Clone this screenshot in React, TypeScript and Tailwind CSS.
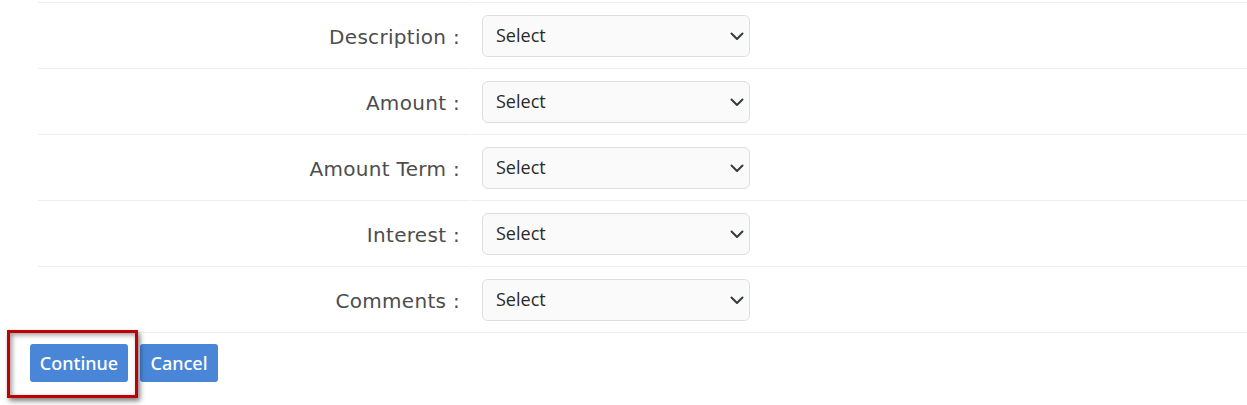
import React from 'react';

const fields = ['Description', 'Amount', 'Amount Term', 'Interest', 'Comments'];

const Chevron = () => (
    <svg className="pointer-events-none absolute right-[5px] top-1/2 -translate-y-1/2" width="16" height="16" viewBox="0 0 16 16" fill="none">
        <path d="M2.5 5.5 8 11l5.5-5.5" stroke="#343a40" strokeWidth="2" strokeLinecap="round" strokeLinejoin="round" />
    </svg>
);

const FieldRow: React.FC<{ label: string }> = ({ label }) => (
    <div className="flex gap-px h-[66px]">
        <div className="w-[432px] border-t border-[#eeeeee] flex items-center justify-end pr-[10px]">
            <span className="text-[20px] text-[#4d4d4d] font-normal tracking-[0.3px] pt-[2px]" style={{ fontFamily: '"DejaVu Sans", sans-serif' }}>
                {label} :
            </span>
        </div>
        <div className="flex-1 border-t border-[#eeeeee] flex items-center pl-[11px]">
            <div className="relative w-[268px] h-[42px]">
                <select
                    defaultValue=""
                    className="w-full h-full appearance-none rounded-[6px] border border-[#dedede] bg-[#fafafa] pl-[13px] pr-8 text-[18px] font-normal text-[#2a2a2a] outline-none"
                    style={{ fontFamily: '"Open Sans", sans-serif' }}
                >
                    <option value="">Select</option>
                </select>
                <Chevron />
            </div>
        </div>
    </div>
);

export default function App() {
    return (
        <div className="w-[1247px] h-[405px] bg-white overflow-hidden pt-[2px]">
            <div className="ml-[38px]">
                {fields.map((f) => (
                    <FieldRow key={f} label={f} />
                ))}
                <div className="border-t border-[#eeeeee] h-px" />
            </div>
            <div className="relative flex gap-3 ml-[30px] mt-[11px]" style={{ fontFamily: '"Noto Sans", sans-serif' }}>
                <button className="w-[98px] h-[38px] rounded-[3px] bg-[#4a86d8] text-white text-[18px] font-medium">
                    Continue
                </button>
                <button className="w-[78px] h-[38px] rounded-[3px] bg-[#4a86d8] text-white text-[18px] font-medium">
                    Cancel
                </button>
                <div className="absolute left-[-23px] top-[-14px] w-[131px] h-[68px] border-[3px] border-[#c00000] shadow-[2px_3px_5px_rgba(0,0,0,0.5),inset_2px_2px_5px_rgba(0,0,0,0.4)] pointer-events-none" />
            </div>
        </div>
    );
}
